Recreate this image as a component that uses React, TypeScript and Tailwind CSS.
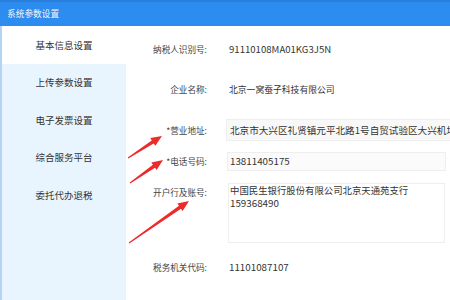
import React from 'react'

const MENU = ['基本信息设置', '上传参数设置', '电子发票设置', '综合服务平台', '委托代办退税']

const ARROWS = [
    { t: [128, 158], h: [162, 136] },
    { t: [130, 183], h: [163, 160] },
    { t: [129, 243], h: [189, 201] },
]

const arrowPoints = (t: number[], h: number[]) => {
    const dx = h[0] - t[0], dy = h[1] - t[1]
    const len = Math.hypot(dx, dy)
    const ux = dx / len, uy = dy / len
    const nx = -uy, ny = ux
    const L = 11, W = 4.6
    const bx = h[0] - ux * L, by = h[1] - uy * L
    const p = (x: number, y: number) => `${x.toFixed(1)},${y.toFixed(1)}`
    return [
        p(t[0] + nx * 0.5, t[1] + ny * 0.5),
        p(bx + nx * 1.8, by + ny * 1.8),
        p(bx + nx * W, by + ny * W),
        p(h[0], h[1]),
        p(bx - nx * W, by - ny * W),
        p(bx - nx * 1.8, by - ny * 1.8),
        p(t[0] - nx * 0.5, t[1] - ny * 0.5),
    ].join(' ')
}

const Label = ({ children }: { children: React.ReactNode }) => (
    <div className="w-[81px] shrink-0 text-right text-[8.6px] text-[#444]">{children}</div>
)

export default function App() {
    return (
        <div className="relative w-[450px] h-[300px] overflow-hidden bg-white" style={{ fontFamily: '"Noto Sans CJK SC", "Noto Sans", sans-serif' }}>
            <div className="h-[26px] bg-[#2d8cf0] border-t-2 border-[#2a7dd9] flex items-center px-[7px]">
                <span className="text-[8.7px] text-white/95">系统参数设置</span>
            </div>
            <div className="flex h-[274px]">
                <div className="w-[126px] shrink-0 bg-[#e9f5fe] border-l-2 border-[#b3d5f3] flex flex-col">
                    {MENU.map((m, i) => (
                        <div key={m} className={`h-[37.5px] flex items-center justify-center text-[9.5px] text-[#333] ${i === 0 ? 'bg-white' : ''}`}>
                            {m}
                        </div>
                    ))}
                </div>
                <div className="flex-1 flex flex-col pt-[11px] leading-[13px]">
                    <div className="flex items-center h-[24px]">
                        <Label>纳税人识别号:</Label>
                        <div className="ml-[22px] text-[9.6px] text-[#333]">91110108MA01KG3J5N</div>
                    </div>
                    <div className="flex items-center h-[24px] mt-[16px]">
                        <Label>企业名称:</Label>
                        <div className="ml-[22px] text-[8.8px] text-[#333]">北京一窝蚕子科技有限公司</div>
                    </div>
                    <div className="flex items-center h-[22px] mt-[18px]">
                        <Label>*营业地址:</Label>
                        <div className="ml-[19px] h-[22px] w-[260px] shrink-0 bg-[#f8f8f8] border border-[#eeeeee] flex items-center pl-[3px] whitespace-nowrap text-[9.6px] text-[#333]">
                            北京市大兴区礼贤镇元平北路1号自贸试验区大兴机场
                        </div>
                    </div>
                    <div className="flex items-center h-[19px] mt-[11px]">
                        <Label>*电话号码:</Label>
                        <div className="ml-[20px] h-[19px] w-[219px] shrink-0 bg-[#fbfbfb] border border-[#eeeeee] flex items-center pl-[2px] text-[9.8px] text-[#333]">
                            13811405175
                        </div>
                    </div>
                    <div className="flex items-start h-[60px] mt-[12px]">
                        <div className="pt-[3px]"><Label>开户行及账号:</Label></div>
                        <div className="ml-[21px] h-[60px] w-[217px] shrink-0 bg-white border border-[#eeeeee] pl-[1px] text-[9.4px] text-[#333] leading-[13px]">
                            <div>中国民生银行股份有限公司北京天通苑支行</div>
                            <div className="text-[9.8px]">159368490</div>
                        </div>
                    </div>
                    <div className="flex items-center h-[24px] mt-[12px]">
                        <Label>税务机关代码:</Label>
                        <div className="ml-[22px] text-[9.8px] text-[#333]">11101087107</div>
                    </div>
                </div>
            </div>
            <svg className="absolute inset-0 pointer-events-none" width="450" height="300" viewBox="0 0 450 300">
                {ARROWS.map((a, i) => (
                    <polygon key={i} points={arrowPoints(a.t, a.h)} fill="#ec2b2b" />
                ))}
            </svg>
        </div>
    )
}
